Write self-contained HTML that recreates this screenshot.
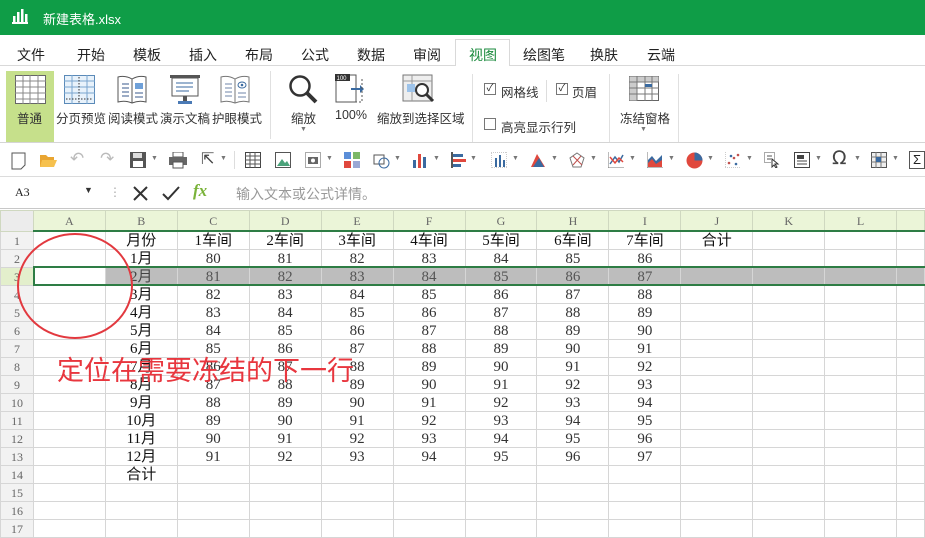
<!DOCTYPE html>
<html><head><meta charset="utf-8"><style>
*{margin:0;padding:0;box-sizing:border-box}
body{width:925px;height:527px;overflow:hidden;background:#fff;font-family:"Liberation Sans","Noto Sans CJK SC",sans-serif;position:relative;font-size:13px;color:#222}
.abs{position:absolute}
#title{left:0;top:0;width:925px;height:35px;background:#0f9d47;color:#fff}
#tabs{top:35px;left:0;width:925px;height:31px;border-bottom:1px solid #d9d9d9;background:#fff}
.tab{position:absolute;top:10px;font-size:14px;color:#222}
#ribbon{top:66px;left:0;width:925px;height:77px;background:#fff;border-bottom:1px solid #d5d5d5}
.rl{position:absolute;font-size:12.5px;color:#333;white-space:nowrap}
#tb{top:143px;left:0;width:925px;height:34px;border-bottom:1px solid #dcdcdc}
#fb{top:177px;left:0;width:925px;height:32px;border-bottom:1px solid #c8c8c8}
table{position:absolute;left:0;top:210px;border-collapse:collapse;table-layout:fixed}
td{border:1px solid #d6d6d6;height:18px;padding:0;text-align:center;font-family:"Liberation Serif","Noto Serif CJK SC",serif;font-size:15px;color:#333;line-height:16px;overflow:hidden;white-space:nowrap}
tr.h td{height:21px;background:#ebf5d8;font-size:12px;color:#666;border-color:#cfd8c0}
td.rh{background:#f2f2f2;font-size:12px;color:#666}
tr.sel td{background:#bdbdbd;color:#555}
tr.sel td.a{background:#fff}
tr.sel td.rh{background:#e3efcc}
.cj{font-family:"Liberation Serif","Noto Sans CJK SC",serif;color:#111}
.ic{position:absolute}
</style></head><body>
<div id="title" class="abs">
 <svg class="ic" style="left:12px;top:9px" width="16" height="15"><rect x="0" y="13" width="16" height="2" fill="#fff"/><rect x="1" y="7" width="2.5" height="6" fill="#fff"/><rect x="5" y="3" width="2.5" height="10" fill="#fff"/><rect x="9" y="0" width="2.5" height="13" fill="#fff"/><rect x="13" y="5" width="2.5" height="8" fill="#fff"/></svg>
 <div class="abs" style="left:43px;top:9px;font-size:13px">新建表格.xlsx</div>
</div>
<div id="tabs" class="abs">
 <span class="tab" style="left:17px">文件</span><span class="tab" style="left:77px">开始</span><span class="tab" style="left:133px">模板</span><span class="tab" style="left:189px">插入</span><span class="tab" style="left:245px">布局</span><span class="tab" style="left:301px">公式</span><span class="tab" style="left:357px">数据</span><span class="tab" style="left:413px">审阅</span>
 <div class="abs" style="left:455px;top:4px;width:55px;height:28px;border:1px solid #d9d9d9;border-bottom:1px solid #fff;background:#fff"></div>
 <span class="tab" style="left:469px;color:#1a8a3c">视图</span><span class="tab" style="left:523px">绘图笔</span><span class="tab" style="left:590px">换肤</span><span class="tab" style="left:647px">云端</span>
</div>
<div id="ribbon" class="abs">
 <div class="abs" style="left:6px;top:5px;width:48px;height:71px;background:#c6e08b"></div>
 <svg class="ic" style="left:15px;top:9px" width="32" height="30"><rect x="0.5" y="0.5" width="30" height="28" fill="#fff" stroke="#666"/><g stroke="#888"><path d="M0 6H31M0 12H31M0 18H31M0 24H31M8 0V29M15 0V29M23 0V29"/></g></svg>
 <svg class="ic" style="left:64px;top:9px" width="32" height="30"><rect x="0.5" y="0.5" width="30" height="28" fill="#e8f2fb" stroke="#5b8ab8"/><g stroke="#7aa5cf"><path d="M0 6H31M0 12H31M0 18H31M8 0V29M23 0V29"/></g><path d="M2 24H29M15 2V28" stroke="#333" stroke-dasharray="1.5 1.5"/></svg>
 <svg class="ic" style="left:117px;top:9px" width="30" height="30"><path d="M1 2Q8 0 15 4Q22 0 29 2V27Q22 25 15 28Q8 25 1 27Z" fill="#fff" stroke="#555"/><path d="M15 4V28" stroke="#555"/><path d="M5 9H12M5 13H12M5 17H12M5 21H12" stroke="#3a5a8c"/><rect x="18" y="8" width="8" height="6" fill="#6fa0d8"/><path d="M18 18H26M18 22H26" stroke="#3a5a8c"/></svg>
 <svg class="ic" style="left:169px;top:9px" width="32" height="32"><rect x="1" y="0" width="30" height="3" fill="#555"/><rect x="3" y="3" width="26" height="18" fill="#fff" stroke="#555"/><path d="M7 8H24M7 12H24M7 16H20" stroke="#3a6aa0"/><rect x="14" y="21" width="4" height="5" fill="#555"/><rect x="9" y="26" width="14" height="3" fill="#4a7ab5"/></svg>
 <svg class="ic" style="left:220px;top:9px" width="30" height="30"><path d="M1 2Q8 0 15 4Q22 0 29 2V27Q22 25 15 28Q8 25 1 27Z" fill="#fff" stroke="#777"/><path d="M15 4V28" stroke="#777"/><path d="M5 9H12M5 13H12M5 17H12M5 21H12M18 18H26M18 22H26" stroke="#6f86a8"/><ellipse cx="22" cy="10" rx="4" ry="3" fill="none" stroke="#3a6aa0"/><circle cx="22" cy="10" r="1.3" fill="#3a6aa0"/></svg>
 <div class="rl" style="left:17px;top:42px">普通</div>
 <div class="rl" style="left:56px;top:42px">分页预览</div>
 <div class="rl" style="left:108px;top:42px">阅读模式</div>
 <div class="rl" style="left:160px;top:42px">演示文稿</div>
 <div class="rl" style="left:212px;top:42px">护眼模式</div>
 <div class="abs" style="left:270px;top:5px;width:1px;height:68px;background:#e0e0e0"></div>
 <svg class="ic" style="left:288px;top:8px" width="30" height="32"><circle cx="12" cy="12" r="9.5" fill="none" stroke="#333" stroke-width="2.5"/><path d="M19 19L28 28" stroke="#333" stroke-width="4"/></svg>
 <div class="rl" style="left:291px;top:42px">缩放</div>
 <div class="abs" style="left:300px;top:60px;font-size:7px;color:#777">▼</div>
 <svg class="ic" style="left:335px;top:8px" width="32" height="30"><rect x="1" y="1" width="20" height="27" fill="#fff" stroke="#555"/><rect x="0" y="0" width="15" height="7" fill="#333"/><text x="1.5" y="6" font-size="6" fill="#fff" font-family="Liberation Sans">100</text><path d="M16 15H27" stroke="#3a6aa0" stroke-width="2"/><path d="M25 11L29 15L25 19Z" fill="#3a6aa0"/><path d="M27 5V28H21" stroke="#555" stroke-dasharray="2 2" fill="none"/></svg>
 <div class="rl" style="left:335px;top:42px">100%</div>
 <svg class="ic" style="left:402px;top:8px" width="34" height="30"><rect x="1" y="1" width="29" height="26" fill="#eee" stroke="#777"/><path d="M1 7H30M10 1V27" stroke="#999"/><rect x="5" y="10" width="8" height="8" fill="#9dc3ea"/><circle cx="20" cy="16" r="6" fill="#fff" stroke="#333" stroke-width="2"/><path d="M24 20L31 27" stroke="#333" stroke-width="3"/></svg>
 <div class="rl" style="left:377px;top:42px">缩放到选择区域</div>
 <div class="abs" style="left:472px;top:8px;width:1px;height:68px;background:#e0e0e0"></div>
 <div class="abs" style="left:484px;top:17px;width:12px;height:12px;border:1px solid #777;font-size:10px;line-height:10px;text-align:center">✓</div>
 <div class="rl" style="left:501px;top:16px">网格线</div>
 <div class="abs" style="left:546px;top:14px;width:1px;height:22px;background:#ddd"></div>
 <div class="abs" style="left:556px;top:17px;width:12px;height:12px;border:1px solid #777;font-size:10px;line-height:10px;text-align:center">✓</div>
 <div class="rl" style="left:572px;top:16px">页眉</div>
 <div class="abs" style="left:484px;top:52px;width:12px;height:12px;border:1px solid #777"></div>
 <div class="rl" style="left:501px;top:51px">高亮显示行列</div>
 <div class="abs" style="left:609px;top:8px;width:1px;height:68px;background:#e0e0e0"></div>
 <svg class="ic" style="left:629px;top:10px" width="31" height="28"><rect x="0.5" y="0.5" width="29" height="24" fill="#fff" stroke="#666"/><rect x="0.5" y="0.5" width="29" height="6" fill="#ccc"/><rect x="0.5" y="0.5" width="8" height="24" fill="#ccc"/><path d="M0 6H30M0 12H30M0 18H30M8 0V25M16 0V25M23 0V25" stroke="#777"/><rect x="16" y="8" width="7" height="3" fill="#3a6aa0"/></svg>
 <div class="rl" style="left:620px;top:42px">冻结窗格</div>
 <div class="abs" style="left:640px;top:60px;font-size:7px;color:#777">▼</div>
 <div class="abs" style="left:678px;top:8px;width:1px;height:68px;background:#e0e0e0"></div>
</div>
<div id="tb" class="abs">
 <svg class="ic" style="left:11px;top:9px" width="16" height="18"><path d="M1 1H14V13L10 17H1Z" fill="#fff" stroke="#555"/></svg>
 <svg class="ic" style="left:39px;top:10px" width="18" height="15"><path d="M1 2H7L9 4H15V14H1Z" fill="#e9a531"/><path d="M3 7H18L15 14H1Z" fill="#f6c14e"/></svg>
 <div class="abs" style="left:70px;top:6px;font-size:17px;color:#bbb">↶</div>
 <div class="abs" style="left:100px;top:6px;font-size:17px;color:#bbb">↷</div>
 <svg class="ic" style="left:130px;top:9px" width="16" height="16"><rect x="0" y="0" width="16" height="16" fill="#555"/><rect x="3" y="1" width="9" height="5" fill="#ddd"/><rect x="3" y="9" width="10" height="6" fill="#fff"/></svg>
 <div class="abs" style="left:151px;top:12px;font-size:7px;color:#777">▼</div>
 <svg class="ic" style="left:169px;top:9px" width="18" height="17"><rect x="4" y="0" width="10" height="5" fill="#fff" stroke="#555"/><rect x="0" y="5" width="18" height="8" fill="#666"/><rect x="4" y="10" width="10" height="6" fill="#fff" stroke="#555"/></svg>
 <div class="abs" style="left:201px;top:6px;font-size:16px;color:#444">⇱</div>
 <div class="abs" style="left:220px;top:12px;font-size:7px;color:#777">▼</div>
 <div class="abs" style="left:234px;top:8px;width:1px;height:18px;background:#ddd"></div>
 <svg class="ic" style="left:245px;top:9px" width="16" height="16"><rect x="0.5" y="0.5" width="15" height="15" fill="#fff" stroke="#444"/><path d="M0 4H16M0 8H16M0 12H16M5 0V16M10 0V16" stroke="#555"/></svg>
 <svg class="ic" style="left:275px;top:9px" width="16" height="16"><rect x="0.5" y="0.5" width="15" height="15" fill="#fff" stroke="#555"/><path d="M2 14L7 7L10 11L12 9L15 14Z" fill="#4aa27a"/></svg>
 <svg class="ic" style="left:305px;top:9px" width="16" height="16"><rect x="0.5" y="0.5" width="15" height="15" fill="none" stroke="#555" stroke-dasharray="1 1"/><rect x="3" y="5" width="10" height="7" fill="#666"/><circle cx="8" cy="8.5" r="2" fill="#fff"/></svg>
 <div class="abs" style="left:326px;top:12px;font-size:7px;color:#777">▼</div>
 <svg class="ic" style="left:344px;top:9px" width="16" height="16"><rect x="0" y="0" width="7" height="7" fill="#5b8ed8"/><rect x="9" y="0" width="7" height="7" fill="#7cb868"/><rect x="0" y="9" width="7" height="7" fill="#e0483d"/><rect x="9" y="9" width="7" height="7" fill="#9aa8d4"/></svg>
 <svg class="ic" style="left:373px;top:8px" width="18" height="18"><rect x="1" y="4" width="10" height="9" fill="none" stroke="#555"/><circle cx="11" cy="12" r="5" fill="none" stroke="#3a6aa0"/></svg>
 <div class="abs" style="left:394px;top:12px;font-size:7px;color:#777">▼</div>
 <svg class="ic" style="left:412px;top:9px" width="16" height="16"><rect x="1" y="8" width="3" height="8" fill="#3a6aa0"/><rect x="6" y="2" width="3" height="14" fill="#e0483d"/><rect x="11" y="5" width="3" height="11" fill="#3a6aa0"/></svg>
 <div class="abs" style="left:433px;top:12px;font-size:7px;color:#777">▼</div>
 <svg class="ic" style="left:451px;top:9px" width="16" height="16"><rect x="0" y="0" width="2" height="16" fill="#555"/><rect x="2" y="2" width="10" height="3" fill="#3a6aa0"/><rect x="2" y="7" width="13" height="3" fill="#e0483d"/><rect x="2" y="12" width="8" height="3" fill="#3a6aa0"/></svg>
 <div class="abs" style="left:470px;top:12px;font-size:7px;color:#777">▼</div>
 <svg class="ic" style="left:491px;top:9px" width="16" height="16"><rect x="0" y="0" width="16" height="16" fill="none" stroke="#999" stroke-dasharray="1 1"/><rect x="4" y="6" width="2" height="9" fill="#3a6aa0"/><rect x="8" y="3" width="2" height="12" fill="#3a6aa0"/><rect x="12" y="8" width="2" height="7" fill="#3a6aa0"/></svg>
 <div class="abs" style="left:512px;top:12px;font-size:7px;color:#777">▼</div>
 <svg class="ic" style="left:530px;top:9px" width="16" height="16"><path d="M1 15L7 2L15 15Z" fill="#e0483d"/><path d="M3 15L9 6L14 15Z" fill="#3a6aa0"/></svg>
 <div class="abs" style="left:551px;top:12px;font-size:7px;color:#777">▼</div>
 <svg class="ic" style="left:569px;top:9px" width="16" height="16"><path d="M8 1L15 6L12 15H4L1 6Z" fill="none" stroke="#777"/><path d="M4 4L13 13M12 4L4 13" stroke="#c0504d"/></svg>
 <div class="abs" style="left:590px;top:12px;font-size:7px;color:#777">▼</div>
 <svg class="ic" style="left:608px;top:9px" width="16" height="16"><path d="M0 0V16H16" stroke="#777" fill="none"/><path d="M2 12L7 5L11 10L15 3" stroke="#3a6aa0" fill="none" stroke-width="1.5"/><path d="M2 5L7 11L11 6L15 10" stroke="#e0483d" fill="none" stroke-width="1.5"/></svg>
 <div class="abs" style="left:629px;top:12px;font-size:7px;color:#777">▼</div>
 <svg class="ic" style="left:647px;top:9px" width="16" height="16"><path d="M0 0V16H16" stroke="#777" fill="none"/><path d="M1 15V8L5 4L9 9L15 3V15Z" fill="#3a6aa0"/><path d="M1 15V11L5 7L9 12L15 8V15Z" fill="#e0483d"/></svg>
 <div class="abs" style="left:668px;top:12px;font-size:7px;color:#777">▼</div>
 <svg class="ic" style="left:686px;top:9px" width="17" height="17"><circle cx="8.5" cy="8.5" r="8" fill="#e0483d"/><path d="M8.5 8.5V0.5A8 8 0 0 1 16.5 8.5Z" fill="#3a6aa0"/></svg>
 <div class="abs" style="left:707px;top:12px;font-size:7px;color:#777">▼</div>
 <svg class="ic" style="left:725px;top:9px" width="16" height="16"><path d="M0 0V16H16" stroke="#999" stroke-dasharray="1 1" fill="none"/><g fill="#c0504d"><circle cx="4" cy="11" r="1.3"/><circle cx="9" cy="6" r="1.3"/><circle cx="13" cy="3" r="1.3"/></g><g fill="#3a6aa0"><circle cx="6" cy="4" r="1.3"/><circle cx="11" cy="12" r="1.3"/></g></svg>
 <div class="abs" style="left:746px;top:12px;font-size:7px;color:#777">▼</div>
 <svg class="ic" style="left:764px;top:9px" width="16" height="16"><rect x="0.5" y="0.5" width="10" height="10" fill="none" stroke="#555" stroke-dasharray="1 1"/><path d="M3 4H8M3 7H7" stroke="#555"/><path d="M8 7L8 15L10 13L12 16L13 15L11 12L14 12Z" fill="#fff" stroke="#333"/></svg>
 <svg class="ic" style="left:794px;top:9px" width="16" height="16"><rect x="0.5" y="0.5" width="15" height="15" fill="#fff" stroke="#444"/><rect x="3" y="3" width="7" height="4" fill="#444"/><path d="M3 9H13M3 12H13" stroke="#444"/></svg>
 <div class="abs" style="left:815px;top:12px;font-size:7px;color:#777">▼</div>
 <div class="abs" style="left:832px;top:4px;font-size:19px;color:#444;font-family:'DejaVu Sans'">Ω</div>
 <div class="abs" style="left:854px;top:12px;font-size:7px;color:#777">▼</div>
 <svg class="ic" style="left:871px;top:9px" width="16" height="16"><rect x="0.5" y="0.5" width="15" height="15" fill="#eee" stroke="#555"/><path d="M0 5H16M0 10H16M5 0V16M10 0V16" stroke="#777"/><rect x="5" y="5" width="5" height="5" fill="#3a6aa0"/></svg>
 <div class="abs" style="left:892px;top:12px;font-size:7px;color:#777">▼</div>
 <div class="abs" style="left:909px;top:8px;width:16px;height:18px;border:1px solid #555;font-size:13px;line-height:16px;text-align:center">Σ</div>
</div>
<div id="fb" class="abs">
 <div class="abs" style="left:15px;top:8px;font-size:12px;font-family:'Liberation Serif',serif">A3</div>
 <div class="abs" style="left:84px;top:8px;font-size:9px;color:#333">▼</div>
 <div class="abs" style="left:109px;top:8px;font-size:12px;color:#aaa">⋮</div>
 <svg class="ic" style="left:133px;top:9px" width="15" height="15"><path d="M1 1L14 14M14 1L1 14" stroke="#333" stroke-width="2"/></svg>
 <svg class="ic" style="left:162px;top:9px" width="18" height="15"><path d="M1 8L6 13L17 1" stroke="#333" stroke-width="2" fill="none"/></svg>
 <div class="abs" style="left:193px;top:4px;font-size:17px;color:#7ab33a;font-style:italic;font-weight:bold;font-family:'Liberation Serif',serif">fx</div>
 <div class="abs" style="left:236px;top:7px;font-size:14px;color:#999">输入文本或公式详情。</div>
</div>
<table>
<colgroup><col style="width:33px"><col style="width:72px"><col style="width:72px"><col style="width:72px"><col style="width:72px"><col style="width:72px"><col style="width:72px"><col style="width:72px"><col style="width:72px"><col style="width:72px"><col style="width:72px"><col style="width:72px"><col style="width:72px"><col style="width:28px"></colgroup>
<tr class="h"><td class="rh" style="background:#ececec"></td><td>A</td><td>B</td><td>C</td><td>D</td><td>E</td><td>F</td><td>G</td><td>H</td><td>I</td><td>J</td><td>K</td><td>L</td><td></td></tr>
<tr><td class="rh">1</td><td></td><td class="cj">月份</td><td class="cj">1车间</td><td class="cj">2车间</td><td class="cj">3车间</td><td class="cj">4车间</td><td class="cj">5车间</td><td class="cj">6车间</td><td class="cj">7车间</td><td class="cj">合计</td><td></td><td></td><td></td></tr>
<tr><td class="rh">2</td><td></td><td class="cj">1月</td><td>80</td><td>81</td><td>82</td><td>83</td><td>84</td><td>85</td><td>86</td><td></td><td></td><td></td><td></td></tr>
<tr class="sel"><td class="rh">3</td><td class="a"></td><td class="cj" style="color:#444">2月</td><td>81</td><td>82</td><td>83</td><td>84</td><td>85</td><td>86</td><td>87</td><td></td><td></td><td></td><td></td></tr>
<tr><td class="rh">4</td><td></td><td class="cj">3月</td><td>82</td><td>83</td><td>84</td><td>85</td><td>86</td><td>87</td><td>88</td><td></td><td></td><td></td><td></td></tr>
<tr><td class="rh">5</td><td></td><td class="cj">4月</td><td>83</td><td>84</td><td>85</td><td>86</td><td>87</td><td>88</td><td>89</td><td></td><td></td><td></td><td></td></tr>
<tr><td class="rh">6</td><td></td><td class="cj">5月</td><td>84</td><td>85</td><td>86</td><td>87</td><td>88</td><td>89</td><td>90</td><td></td><td></td><td></td><td></td></tr>
<tr><td class="rh">7</td><td></td><td class="cj">6月</td><td>85</td><td>86</td><td>87</td><td>88</td><td>89</td><td>90</td><td>91</td><td></td><td></td><td></td><td></td></tr>
<tr><td class="rh">8</td><td></td><td class="cj">7月</td><td>86</td><td>87</td><td>88</td><td>89</td><td>90</td><td>91</td><td>92</td><td></td><td></td><td></td><td></td></tr>
<tr><td class="rh">9</td><td></td><td class="cj">8月</td><td>87</td><td>88</td><td>89</td><td>90</td><td>91</td><td>92</td><td>93</td><td></td><td></td><td></td><td></td></tr>
<tr><td class="rh">10</td><td></td><td class="cj">9月</td><td>88</td><td>89</td><td>90</td><td>91</td><td>92</td><td>93</td><td>94</td><td></td><td></td><td></td><td></td></tr>
<tr><td class="rh">11</td><td></td><td class="cj">10月</td><td>89</td><td>90</td><td>91</td><td>92</td><td>93</td><td>94</td><td>95</td><td></td><td></td><td></td><td></td></tr>
<tr><td class="rh">12</td><td></td><td class="cj">11月</td><td>90</td><td>91</td><td>92</td><td>93</td><td>94</td><td>95</td><td>96</td><td></td><td></td><td></td><td></td></tr>
<tr><td class="rh">13</td><td></td><td class="cj">12月</td><td>91</td><td>92</td><td>93</td><td>94</td><td>95</td><td>96</td><td>97</td><td></td><td></td><td></td><td></td></tr>
<tr><td class="rh">14</td><td></td><td class="cj">合计</td><td></td><td></td><td></td><td></td><td></td><td></td><td></td><td></td><td></td><td></td><td></td></tr>
<tr><td class="rh">15</td><td></td><td></td><td></td><td></td><td></td><td></td><td></td><td></td><td></td><td></td><td></td><td></td><td></td></tr>
<tr><td class="rh">16</td><td></td><td></td><td></td><td></td><td></td><td></td><td></td><td></td><td></td><td></td><td></td><td></td><td></td></tr>
<tr><td class="rh">17</td><td></td><td></td><td></td><td></td><td></td><td></td><td></td><td></td><td></td><td></td><td></td><td></td><td></td></tr>
</table>
<div class="abs" style="left:33px;top:230px;width:892px;height:2px;background:#2e7d45"></div>
<div class="abs" style="left:33px;top:266px;width:892px;height:2px;background:#2e7d45"></div>
<div class="abs" style="left:33px;top:284px;width:892px;height:2px;background:#2e7d45"></div>
<div class="abs" style="left:33px;top:266px;width:2px;height:20px;background:#2e7d45"></div>
<svg class="abs" style="left:0;top:0" width="925" height="527"><ellipse cx="75" cy="286" rx="57" ry="52" fill="none" stroke="#e2393f" stroke-width="2"/></svg>
<div class="abs" style="left:57px;top:352px;font-size:27px;color:#e8363e;font-family:'Noto Sans CJK SC',sans-serif;line-height:34px;white-space:nowrap">定位在需要冻结的下一行</div>
</body></html>
